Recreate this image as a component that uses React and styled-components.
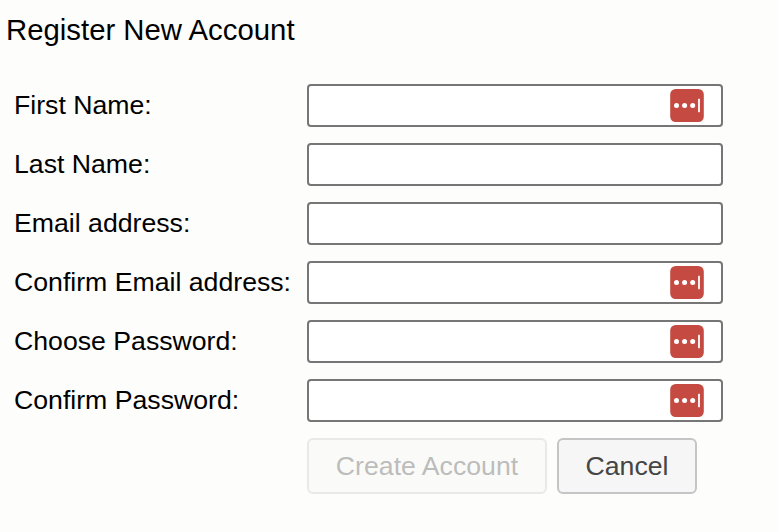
import styled, { createGlobalStyle } from "styled-components";

const fields = [
  { id: "firstName", label: "First Name:", type: "text", manager: true },
  { id: "lastName", label: "Last Name:", type: "text" },
  { id: "email", label: "Email address:", type: "text" },
  { id: "confirmEmail", label: "Confirm Email address:", type: "text", manager: true },
  { id: "password", label: "Choose Password:", type: "password", manager: true },
  { id: "confirmPassword", label: "Confirm Password:", type: "password", manager: true },
];

export default function App() {
  return (
    <Page>
      <GlobalStyle />
      <Title>Register New Account</Title>
      <Form onSubmit={(e) => e.preventDefault()}>
        {fields.map((field) => (
          <Row key={field.id}>
            <Label htmlFor={field.id}>{field.label}</Label>
            <Field>
              <Input id={field.id} type={field.type} />
              {field.manager && <ManagerIcon />}
            </Field>
          </Row>
        ))}
        <Actions>
          <Button $width="240px" type="submit" disabled>
            Create Account
          </Button>
          <Button $width="140px" type="button">
            Cancel
          </Button>
        </Actions>
      </Form>
    </Page>
  );
}

function ManagerIcon() {
  return (
    <Badge viewBox="0 0 34 33" aria-hidden="true">
      <rect x="0.2" width="33.6" height="33" rx="5.5" fill="#c54b42" />
      <circle cx="6.5" cy="16.4" r="2.5" fill="#fff" />
      <circle cx="14.6" cy="16.4" r="2.5" fill="#fff" />
      <circle cx="22.7" cy="16.4" r="2.5" fill="#fff" />
      <rect x="28.1" y="9.8" width="1.8" height="13.4" fill="#fff" />
    </Badge>
  );
}

const GlobalStyle = createGlobalStyle`
  * {
    box-sizing: border-box;
  }
  body {
    margin: 0;
    background-color: #fdfdfc;
    color: #000;
    font-family: "Liberation Sans", Arial, sans-serif;
    font-size: 26.66px;
  }
`;
const Page = styled.div`
  height: 532px;
  padding: 12px 0 0 6px;
  overflow: hidden;
`;
const Title = styled.h1`
  margin: 0 0 36px;
  font-size: 29.33px;
  font-weight: 400;
  line-height: 36px;
`;
const Form = styled.form`
  display: flex;
  flex-direction: column;
  gap: 16px;
`;
const Row = styled.div`
  display: flex;
  align-items: center;
  height: 43px;
`;
const Label = styled.label`
  width: 301px;
  padding-left: 8px;
  line-height: 43px;
  white-space: nowrap;
`;
const Field = styled.div`
  position: relative;
  width: 416px;
  height: 43px;
`;
const Input = styled.input`
  display: block;
  width: 100%;
  height: 100%;
  padding: 2px 58px 2px 6px;
  border: 2px solid #767676;
  border-radius: 4px;
  background-color: #fff;
  font: inherit;
`;
const Badge = styled.svg`
  position: absolute;
  top: 5px;
  right: 19px;
  width: 34px;
  height: 33px;
`;
const Actions = styled.div`
  display: flex;
  gap: 10px;
  padding-left: 301px;
`;
const Button = styled.button`
  width: ${(props) => props.$width};
  height: 56px;
  padding: 0;
  border: 2px solid #c5c5c5;
  border-radius: 6px;
  background-color: #f6f6f6;
  color: #454545;
  font: inherit;
  white-space: nowrap;
  &:disabled {
    opacity: 0.35;
  }
`;
